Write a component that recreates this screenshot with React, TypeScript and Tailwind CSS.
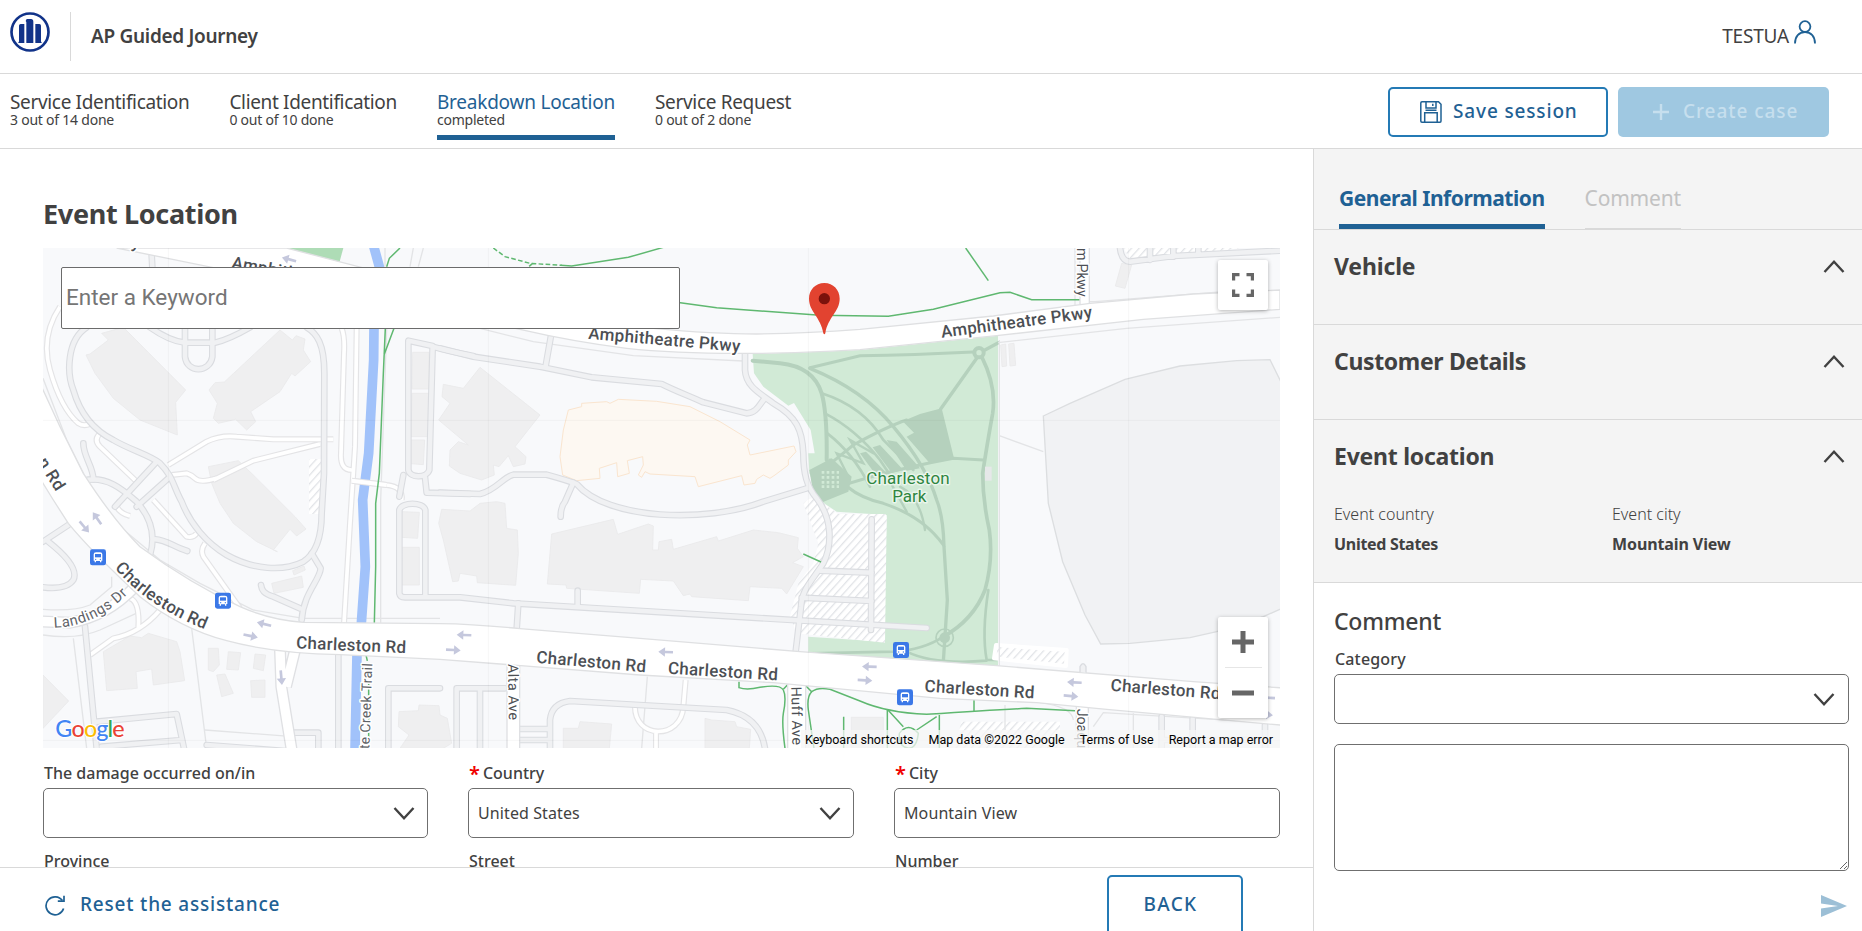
import type { ReactNode } from "react";

const ink = "text-[#414141]";

/* ---------- icons ---------- */

function Chevron({ up = false }: { up?: boolean }) {
  return (
    <svg width="22" height="13" viewBox="0 0 22 13" fill="none" stroke="#414141" strokeWidth="2.4" className="shrink-0">
      <path d={up ? "M1.5 12 L11 1.8 L20.5 12" : "M1.5 1 L11 11.2 L20.5 1"} />
    </svg>
  );
}

function Logo() {
  return (
    <svg width="40" height="40" viewBox="0 0 120 120" className="shrink-0">
      <circle cx="60" cy="60" r="55.5" fill="none" stroke="#113389" strokeWidth="8" />
      <path d="M27 41 Q27 36 32 36 H43 V93 H25 V91 Q27 91 27 87 Z" fill="#113389" />
      <path d="M47 27 L50 21 H63 Q70 21 70 29 V93 H49 V30 Z" fill="#113389" />
      <path d="M76 36 H88 Q93 36 93 41 V87 Q93 91 95 91 V93 H76 Z" fill="#113389" />
    </svg>
  );
}

function UserIcon() {
  return (
    <svg width="22" height="24" viewBox="0 0 22 24" fill="none" stroke="#1f6194" strokeWidth="1.8">
      <circle cx="11" cy="6.6" r="5.4" />
      <path d="M1 23.5 C1 16.5 5 12.2 11 12.2 C17 12.2 21 16.5 21 23.5" />
    </svg>
  );
}

function SaveIcon() {
  return (
    <svg width="22" height="22" viewBox="0 0 22 22" fill="none" stroke="#1f6194" strokeWidth="1.5">
      <path d="M2 .8 H18.5 L21 3.3 V20 Q21 21.2 20 21.2 H2 Q.8 21.2 .8 20 V2 Q.8 .8 2 .8 Z" />
      <path d="M6 .8 V7 H16 V.8 M12.8 2.8 V5" />
      <path d="M4.7 21 V11.8 H17.2 V21 M5.5 9.3 H16.5" />
    </svg>
  );
}

function ResetIcon() {
  return (
    <svg width="20" height="21" viewBox="0 0 20 21" fill="none" stroke="#1f6194" strokeWidth="1.7">
      <path d="M18.6 13.6 A9 9 0 1 1 17.4 5.6" />
      <path d="M19 .8 V6.2 H12.8" />
    </svg>
  );
}

/* ---------- map: drawn at three units per pixel ---------- */

const serviceRoads = [
  "M140 262 C80 300 80 400 100 450 C120 520 160 570 220 600 C270 630 330 645 360 670 C400 710 400 740 425 785 C450 850 500 910 560 945 C640 990 730 995 790 965 C830 940 845 890 845 820 L852 700 L853 400 C853 310 830 280 800 262",
  "M330 262 C370 290 400 305 435 308 L525 308 C560 300 590 285 630 262",
  "M435 262 V350 C440 400 510 400 517 350 V262",
  "M130 610 C130 650 160 680 160 718",
  "M130 722 C200 705 250 750 290 785 C330 830 350 880 330 945",
  "M350 665 L225 800 M385 715 L290 800",
  "M345 898 C380 900 400 920 442 933",
  "M815 940 L842 985 C840 1020 790 1060 785 1140 M780 1105 L700 1070 C670 1060 665 1050 663 1035",
  "M335 45 L337 82",
  "M1105 305 V690 C1110 715 1160 715 1168 690 L1178 318 L1105 302 M1178 320 C1230 335 1260 340 1300 348",
  "M1090 705 L1078 770 M1155 712 L1160 758 L1290 762",
  "M1078 1060 V810 C1085 785 1150 785 1156 810 V1070 M1078 1060 Q1080 1072 1095 1072 H1260 L1420 1090 L2660 1164",
  "M1200 325 L1300 350 L1500 380 L1655 412 L1865 432 C1900 450 1940 465 1990 487 L2120 520 C2150 520 2160 490 2172 478",
  "M1533 287 L1517 378",
  "M2115 340 V390 C2118 440 2160 460 2200 490 C2270 530 2287 570 2290 640 C2290 700 2300 740 2330 775 C2380 840 2375 920 2350 970 C2310 1030 2285 1050 2283 1100 L2267 1235",
  "M1200 758 L1320 762 C1370 750 1390 710 1420 704 H1520 C1560 715 1600 728 1610 732 C1700 840 2000 850 2170 785 L2300 745",
  "M1600 728 L1575 785 Q1562 800 1562 830",
  "M1435 1090 L1430 1168 M1613 1098 V1052",
  "M1250 1525 V1345 H1395 M1320 1350 V1525 M1200 1345 H1045 V1525",
  "M1530 1525 V1440 Q1535 1390 1590 1383 L2060 1410 Q2160 1430 2175 1525 M1440 1467 H1530 M1440 1500 H1530",
  "M135 1160 L170 1525 M170 1445 L410 1422 L432 1525 M185 1520 L425 1500 M500 1515 L760 1535 M762 1478 H835 V1525",
  "M895 1245 V1525 M9 905 L85 855 M25 905 Q120 980 100 1020 Q80 1050 9 1042",
  "M2340 992 L2495 998 M2285 1073 L2495 1083 M2495 838 L2493 1170",
  "M3240 24 Q3245 65 3270 65 L3400 48 L3720 32 M3330 24 V60 M3400 24 V50 M3475 24 V44",
  "M3365 1430 V1525 M3458 1436 V1525 M3675 1455 V1525 M3365 1500 H3675",
];

const pathRoads = [
  "M60 200 C20 260 10 320 30 390 C50 460 80 520 115 550 Q130 560 150 552",
  "M180 580 Q160 600 180 620 L290 725 M385 675 L500 605 Q540 585 590 590 L700 598 H880 M520 720 L640 662 L840 612",
  "M905 265 Q915 290 912 340 L903 640 Q900 690 935 690 M950 265 L945 620 L930 850 L912 1150",
  "M395 705 L440 700 Q455 705 465 715 Q480 730 530 715",
  "M935 722 L1040 735 Q1090 740 1085 780",
  "M240 780 L230 800 Q240 820 270 828 M340 780 L440 890 Q460 895 470 880 M495 910 Q480 930 490 950 L600 1105",
  "M150 1245 L220 1195 Q300 1180 360 1110 M270 1075 Q300 1085 295 1165",
  "M1785 1395 C1780 1500 1925 1500 1930 1400 L1937 1320 M1848 1475 V1525",
];

const parcelLines = [
  "M9 415 L80 600 L150 740 L240 860 L360 960 L480 1030 L640 1110 L790 1135 H1200",
  "M1035 24 V80 M1040 265 L1022 780 V1148 M1150 24 L1135 80 M1120 24 L1110 80",
  "M1320 265 L1480 305 L1780 347 L2110 363 M2874 308 L3260 265 L3720 232",
  "M2878 300 V1277 M2878 587 L3010 635",
  "M100 1195 L140 1525 M455 1165 L500 1525 M9 1185 Q110 1200 180 1170 L300 1115 M9 1108 Q100 1115 150 1095 L215 1040 V1010",
  "M495 1470 L760 1490 M1822 1310 L1805 1525 M2895 1395 V1470 M3280 1420 V1525 M3000 1388 Q3095 1400 3100 1440",
  "M3150 185 H3165 L3620 150 M3105 24 V195 M3160 1460 L3190 1418 L3720 1450",
];

const buildings = [
  "185 280 250 262 437 450 407 487 412 585 300 540 220 475 165 400 138 345 150 342 205 300",
  "720 270 757 300 768 287 795 297 790 330 812 365 765 408 755 400 720 455 632 515 647 545 620 570 587 538 535 550 520 535 532 490 507 450 525 428 553 426",
  "505 680 595 662 640 705 765 830 798 867 770 888 750 868 700 930 712 935 650 905 580 850 540 790 515 730",
  "1118 337 1167 337 1167 447 1116 447", "1116 460 1167 460 1165 590 1113 590", "1104 600 1154 600 1150 674 1100 670",
  "1085 815 1138 817 1133 895 1085 892", "1085 922 1138 922 1138 1035 1084 1035",
  "1210 433 1270 445 1320 382 1500 525 1425 620 1458 650 1455 672 1420 680 1405 647 1377 680 1360 675 1363 705 1325 720 1260 700 1228 678 1230 630 1255 605 1285 615 1196 540 1230 490 1206 470",
  "1205 808 1290 813 1320 790 1370 785 1395 790 1400 865 1432 870 1435 940 1427 1036 1312 1028 1310 1008 1260 1000 1255 1023 1238 1025 1210 900 1196 850",
  "1535 882 1720 838 1733 883 1825 852 1840 858 1838 930 1855 930 1857 905 1895 898 1900 928 2030 890 2035 903 2140 870 2215 878 2275 893 2272 925 2290 950 2258 968 2290 980 2240 1062 2225 1045 2130 1040 2125 1082 1955 1070 1950 1062 1930 1067 1900 1023 1802 1018 1798 1060 1580 1045 1578 1035 1522 1032",
  "695 1030 785 1008 790 1042 702 1060", "758 992 792 978 796 990 762 1005",
  "190 1235 270 1188 305 1193 325 1180 410 1205 420 1235 434 1322 340 1335 335 1287 288 1295 292 1345 200 1352",
  "9 1305 86 1383 9 1465", "505 1225 535 1225 538 1275 520 1295 505 1290", "565 1235 602 1238 595 1290 560 1288",
  "645 1242 677 1245 670 1292 640 1285", "530 1305 555 1302 580 1360 545 1370", "632 1322 675 1320 675 1372 635 1372",
  "1077 1415 1135 1412 1137 1395 1197 1397 1200 1425 1222 1435 1235 1510 1210 1525 1080 1525 1107 1485 1075 1460",
  "1570 1465 1615 1465 1620 1445 1715 1452 1708 1525 1570 1525", "1995 1435 2015 1440 2085 1445 2090 1460 2132 1468 2128 1525 1995 1525",
  "2882 315 2897 312 2900 378 2886 380", "2906 312 2922 310 2927 376 2910 378", "3245 70 3275 75 3255 145 3226 138", "2434 1432 2530 1432 2530 1525 2434 1525",
];

const parkPaths: [string, number][] = [
  ["M2138 362 L2220 370 Q2320 380 2345 460 Q2362 520 2360 660", 12],
  ["M2310 383 L2460 347 Q2620 345 2800 336", 9],
  ["M2310 385 Q2470 450 2560 560 Q2660 680 2690 780 Q2710 830 2712 920 L2722 1080 L2710 1265", 10],
  ["M2345 460 Q2470 500 2530 600 L2620 690", 8], ["M2355 520 Q2450 570 2520 660 L2560 720", 8], ["M2362 580 Q2440 640 2490 740", 8],
  ["M2817 345 L2702 507 M2817 340 L2875 308", 10],
  ["M2825 350 Q2870 440 2858 520 Q2840 620 2828 700 Q2828 780 2848 870 Q2860 960 2835 1050 Q2800 1140 2710 1190", 11],
  ["M2360 680 L2440 615 Q2540 560 2600 540", 9], ["M2340 760 Q2500 700 2740 655 L2830 660", 9],
  ["M2370 660 Q2400 760 2530 790 Q2650 830 2710 915", 9], ["M2580 740 Q2640 770 2655 870 M2550 725 L2600 815", 7],
  ["M2845 1050 Q2825 1180 2840 1260 H2870 M2710 1190 Q2650 1230 2560 1235 L2308 1240 M2600 1235 Q2680 1275 2840 1262", 8],
  ["M2430 720 L2390 640 L2470 670 L2430 600 L2500 640", 7],
];

const greenTrails = [
  "M1080 24 L1048 55 L1040 80 M1062 265 L1032 345 M1036 265 L1030 400 L1018 700 L1007 790 V980 L1003 1150",
  "M1562 76 L1595 78 L1765 52 L1870 22", "M1910 187 L2030 203 L2340 226 L2545 229 L2680 208 L2880 158 L2910 157 L2975 179 H3122",
  "M2777 24 L2845 122", "M2290 942 L2343 966",
  "M2097 1325 V1343 Q2120 1352 2160 1342 Q2220 1332 2230 1350 Q2240 1370 2230 1420 Q2225 1450 2235 1525",
  "M2230 1348 L2245 1332 M2295 1335 L2315 1355 Q2335 1340 2370 1348 L2460 1383 Q2540 1418 2660 1423 Q2860 1410 2960 1405 L3105 1412",
  "M2315 1355 Q2300 1370 2305 1410 L2322 1525 M2411 1430 V1525 M2542 1410 V1525 M2544 1410 L2590 1460 M2690 1430 L2630 1470 M2698 1425 V1525 M2802 1380 V1415",
  "M2578 1480 Q2605 1445 2635 1480 Q2630 1525 2605 1525 Q2575 1520 2578 1480",
];

const amphitheatre =
  "M740 24 L955 80 L1400 190 L1840 265 Q2020 282 2150 282 Q2300 280 2460 268 L2860 228 L3150 190 L3460 162 L3720 150 V208 L3310 238 L2870 287 L2460 329 Q2240 342 2100 340 Q1900 340 1760 325 Q1600 305 1440 268 L505 80 L230 24 Z";
const charleston =
  "M0 430 L60 560 L130 700 Q220 840 300 920 Q450 1030 600 1100 Q690 1140 790 1147 L1200 1151 Q1300 1152 1440 1166 L1800 1195 L2280 1235 L2870 1277 L3460 1325 L3730 1344 V1456 L3200 1408 L2990 1388 L2700 1375 L2200 1328 L1800 1305 L1380 1272 L1200 1258 L900 1244 Q700 1240 560 1202 Q420 1165 300 1070 Q150 930 85 850 L40 780 L0 715 Z";

const arrows: [number, number, number][] = [
  [171, 835, 235], [133, 861, 50], [672, 1152, 194], [632, 1188, 12], [724, 1313, 85], [1240, 1230, 3], [1272, 1185, 182],
  [1877, 1236, 182], [2488, 1280, 182], [2475, 1321, 3], [3103, 1327, 183], [3093, 1368, 5], [3683, 1373, 184], [3677, 1424, 5], [747, 58, 195],
];

const busStops = [[150, 928], [525, 1058], [2559, 1206], [2571, 1348]];

function RoadLabel({ x, y, r, w, size = 51, color = "#4c4f54", weight = 500, children }: { x: number; y: number; r: number; w: number; size?: number; color?: string; weight?: number; children: ReactNode }) {
  return (
    <text transform={`translate(${x} ${y}) rotate(${r})`} fontSize={size} fontWeight={weight} fill={color} textLength={w} stroke="#fff" strokeWidth="9" strokeLinejoin="round" paintOrder="stroke">
      {children}
    </text>
  );
}

function MapCanvas() {
  return (
    <svg width="1237" height="500" viewBox="9 24 3711 1500" className="block font-['Roboto',sans-serif]" fill="none">
      <defs>
        <pattern id="hatch" width="17" height="17" patternUnits="userSpaceOnUse" patternTransform="rotate(42)">
          <rect width="17" height="17" fill="#fff" />
          <path d="M2 0 V17" stroke="#dfe1e5" strokeWidth="3.5" />
        </pattern>
        <path id="curve-charleston" d="M224 984 Q325 1105 520 1178" />
        <path id="curve-landings" d="M42 1163 Q170 1160 275 1050" />
      </defs>
      <rect x="9" y="24" width="3711" height="1500" fill="#f8f9fb" />
      <path d="M740 24 H910 L898 68 Z" fill="#aedcb6" />
      <path d="M3010 528 L3090 490 L3255 418 L3420 378 L3590 362 L3690 359 L3730 440 V1103 L3670 1130 L3530 1175 L3450 1193 L3270 1210 L3182 1212 L3135 1125 L3068 965 L3025 790 Z" fill="#f1f2f4" stroke="#dcdee0" strokeWidth="4" />

      {/* commercial block */}
      <path d="M1585 510 L1625 500 V490 L1700 485 L1710 490 L1735 478 L1850 484 L1950 500 L2040 545 L2130 600 L2122 615 L2130 645 L2262 618 L2268 635 L2245 660 V675 L2205 705 L2190 715 L2170 705 L2150 718 L2145 730 L2112 735 L2105 707 L1975 740 L1965 710 L1830 702 L1815 695 L1805 712 L1795 705 L1810 675 L1808 650 L1762 662 L1768 700 L1733 710 L1730 668 L1678 685 L1680 715 L1610 722 L1568 705 L1560 650 L1570 570 Z" fill="#fdf8f2" stroke="#fae5cf" strokeWidth="3" />

      {/* park */}
      <path d="M2138 342 L2460 330 L2874 287 V1277 L2680 1267 L2305 1237 V1190 L2530 1205 L2540 825 L2390 815 L2345 785 L2308 700 L2305 640 L2324 640 L2312 570 L2262 489 L2245 497 L2170 440 L2142 400 Z" fill="#d1ead6" />
      <g stroke="#b5d1bd" strokeLinecap="round">
        {parkPaths.map(([d, w]) => <path key={d} d={d} strokeWidth={w} />)}
      </g>
      <g fill="#b5d1bd">
        <path d="M2588 544 L2640 522 L2705 505 L2742 655 L2668 668 L2600 590 L2622 578 Z" />
        <path d="M2540 600 L2570 605 L2640 685 L2600 692 Z M2498 622 L2520 615 L2590 690 L2555 698 Z M2460 640 L2478 635 L2540 700 L2510 708 Z" />
        <path d="M2308 690 L2375 655 L2435 710 L2425 755 L2340 790 L2318 750 Z" />
        <circle cx="2817" cy="338" r="20" />
        <circle cx="2714" cy="1193" r="16" />
      </g>
      <circle cx="2817" cy="338" r="8" fill="#d1ead6" />
      <circle cx="2714" cy="1193" r="26" stroke="#b5d1bd" strokeWidth="5" />
      <path d="M2345 697 H2397 M2345 712 H2397 M2345 727 H2397 M2345 740 H2397" stroke="#d1ead6" strokeWidth="8" strokeDasharray="8 7" />
      <rect x="2835" y="680" width="20" height="42" fill="#e6e8e9" />

      {/* parking lots */}
      <g fill="url(#hatch)">
        <path d="M2290 790 Q2320 760 2350 790 L2395 822 H2535 Q2541 825 2540 840 L2535 1208 L2270 1180 L2250 1130 L2275 1030 L2320 970 L2335 910 Z" />
        <path d="M2868 1215 L3080 1230 L3078 1278 L2862 1255 Z" stroke="#fff" strokeWidth="12" strokeLinejoin="round" />
        <rect x="807" y="657" width="36" height="165" />
        <path d="M3250 24 H3600 L3480 42 L3270 56 Z" />
        <path d="M2765 1445 H3060 V1525 H2740 Z" />
      </g>

      <g fill="#efeff0" stroke="#e9e9ea" strokeWidth="2.5">
        {buildings.map((p) => <polygon key={p} points={p} />)}
      </g>
      <g stroke="#e3e4e6" strokeWidth="4">
        {parcelLines.map((d) => <path key={d} d={d} />)}
      </g>
      <g stroke="#e4e4e6" strokeWidth="18" strokeLinejoin="round">
        {pathRoads.map((d) => <path key={d} d={d} />)}
      </g>
      <g stroke="#fff" strokeWidth="11" strokeLinejoin="round">
        {pathRoads.map((d) => <path key={d} d={d} />)}
      </g>
      <g stroke="#dadce0" strokeWidth="20" strokeLinecap="round" strokeLinejoin="round">
        {serviceRoads.map((d) => <path key={d} d={d} />)}
      </g>
      <g stroke="#f0f1f3" strokeWidth="13.5" strokeLinecap="round" strokeLinejoin="round">
        {serviceRoads.map((d) => <path key={d} d={d} />)}
      </g>

      {/* creek */}
      <path d="M1000 15 L1018 80 L1002 262 L1001 360 L986 640 L968 780 L976 980 L964 1150 L951 1240 L945 1530" stroke="#a1c2fa" strokeWidth="29" />
      <path d="M935 722 L1040 735" stroke="#e4e4e6" strokeWidth="18" />
      <path d="M935 722 L1040 735" stroke="#fff" strokeWidth="12" />
      <g stroke="#5fb870" strokeWidth="4.5">
        {greenTrails.map((d) => <path key={d} d={d} />)}
        <path d="M1360 24 L1395 50 L1470 70 L1565 76 M1478 70 L1462 84" strokeDasharray="14 7" />
        <path d="M978 1245 L986 1280 V1525" strokeDasharray="18 8" />
      </g>

      {/* side streets, then the two main roads over them */}
      <g stroke="#dfe0e3">
        <path d="M720 1230 L724 1340 L755 1530 M765 1230 L738 1340" strokeWidth="36" />
        <path d="M0 1144 L90 1148 Q200 1130 285 1040" strokeWidth="36" />
        <path d="M1420 1270 V1530" strokeWidth="42" /><path d="M2270 1330 V1530" strokeWidth="58" />
        <path d="M3134 20 V210" strokeWidth="32" /><path d="M3127 1390 V1530" strokeWidth="40" />
      </g>
      <g stroke="#fff">
        <path d="M720 1230 L724 1340 L755 1530 M765 1230 L738 1340" strokeWidth="28" />
        <path d="M0 1144 L90 1148 Q200 1130 285 1040" strokeWidth="28" />
        <path d="M1420 1270 V1530" strokeWidth="34" /><path d="M2270 1330 V1530" strokeWidth="50" />
        <path d="M3134 20 V210" strokeWidth="24" /><path d="M3127 1390 V1530" strokeWidth="32" />
      </g>
      <path d={amphitheatre} fill="#fff" stroke="#dfe0e2" strokeWidth="4" />
      <path d={charleston} fill="#fff" stroke="#dfe0e2" strokeWidth="4" />
      <path d="M3120 1296 V1280 Q3129 1262 3138 1280 V1298" fill="#f0f1f3" stroke="#dadce0" strokeWidth="4" />
      <path d="M9 541 H3720 M9 1501 H3720 M385 24 V1524 M1345 24 V1524 M2305 24 V1524 M3266 24 V1524" stroke="#000" strokeOpacity=".035" strokeWidth="3" />

      {arrows.map(([x, y, r]) => (
        <path key={`${x}-${y}`} transform={`translate(${x} ${y}) rotate(${r})`} d="M-22 -4 H2 V-14 L22 0 L2 14 V4 H-22 Z" fill="#c5c8dd" />
      ))}

      <RoadLabel x={573} y={84} r={10} w={457}>Amphitheatre Pkwy</RoadLabel>
      <RoadLabel x={1644} y={296} r={5} w={457}>Amphitheatre Pkwy</RoadLabel>
      <RoadLabel x={2705} y={293} r={-7.5} w={457}>Amphitheatre Pkwy</RoadLabel>
      <RoadLabel x={768} y={1225} r={2.5} w={330}>Charleston Rd</RoadLabel>
      <RoadLabel x={1488} y={1268} r={5} w={330}>Charleston Rd</RoadLabel>
      <RoadLabel x={1883} y={1301} r={3.5} w={330}>Charleston Rd</RoadLabel>
      <RoadLabel x={2653} y={1355} r={3.5} w={330}>Charleston Rd</RoadLabel>
      <RoadLabel x={3211} y={1352} r={4.5} w={330}>Charleston Rd</RoadLabel>
      <RoadLabel x={-8} y={666} r={58} w={106}>n Rd</RoadLabel>
      <RoadLabel x={214} y={10} r={11} w={85}>kwy</RoadLabel>
      <RoadLabel x={1404} y={1272} r={89} w={168} size={43} weight={400}>Alta Ave</RoadLabel>
      <RoadLabel x={2254} y={1340} r={89} w={175} size={43} weight={400}>Huff Ave</RoadLabel>
      <RoadLabel x={3112} y={1406} r={90} w={152} size={43} weight={400}>Joaquin</RoadLabel>
      <RoadLabel x={3110} y={24} r={90} w={146} size={43} weight={400}>m Pkwy</RoadLabel>
      <RoadLabel x={988} y={1528} r={-88} w={258} size={42} weight={400} color="#5f6368">te Creek Trail</RoadLabel>
      <g stroke="#fff" strokeWidth="9" strokeLinejoin="round" paintOrder="stroke" fill="#4c4f54">
        <text fontSize="51" fontWeight="500"><textPath href="#curve-charleston" textLength="330">Charleston Rd</textPath></text>
        <text fontSize="44" fill="#5f6368"><textPath href="#curve-landings" textLength="250">Landings Dr</textPath></text>
        <g fontSize="51" fill="#2e8540" textAnchor="middle" stroke="#e9f5eb">
          <text x="2604" y="733" textLength="250">Charleston</text>
          <text x="2608" y="785">Park</text>
        </g>
      </g>

      {busStops.map(([x, y]) => (
        <g key={`${x}-${y}`} transform={`translate(${x} ${y})`}>
          <rect width="48" height="48" rx="7" fill="#3b78e7" />
          <path d="M11 15 Q11 9 18 9 H30 Q37 9 37 15 V34 H34 V39 H30 V35 H18 V39 H14 V34 H11 Z" fill="#fff" />
          <path d="M15 14 H33 V24 H15 Z" fill="#3b78e7" />
          <circle cx="17" cy="30" r="2" fill="#3b78e7" /><circle cx="31" cy="30" r="2" fill="#3b78e7" />
        </g>
      ))}

      {/* marker */}
      <path d="M2353 129 C2326 129 2307 150 2307 176 C2307 215 2343 232 2350 280 Q2353 286 2356 280 C2363 232 2399 215 2399 176 C2399 150 2380 129 2353 129 Z" fill="#e24330" />
      <circle cx="2353" cy="176" r="17" fill="#7b120c" />

      <text x="46" y="1490" fontSize="70" fontWeight="500" textLength="208" className="font-['Lato',sans-serif]" stroke="#fff" strokeWidth="6" paintOrder="stroke">
        <tspan fill="#4285f4">G</tspan><tspan fill="#ea4335">o</tspan><tspan fill="#fbbc04">o</tspan><tspan fill="#4285f4">g</tspan><tspan fill="#34a853">l</tspan><tspan fill="#ea4335">e</tspan>
      </text>
    </svg>
  );
}

function LocationMap() {
  return (
    <div className="relative mt-4 h-[500px] w-[1237px] overflow-hidden">
      <MapCanvas />
      <input
        placeholder="Enter a Keyword"
        className="absolute left-[18px] top-[19px] h-[62px] w-[619px] rounded-[2px] border border-[#6b6b6b] bg-white pb-[2px] pl-[4px] font-['Roboto',sans-serif] text-[22.5px] placeholder:text-[#757575]"
      />
      <button className="absolute right-3 top-3 flex h-[50px] w-[50px] items-center justify-center rounded-[2px] bg-white shadow-[0_1px_4px_rgba(0,0,0,0.3)]">
        <svg width="22" height="24" viewBox="0 0 22 24" fill="none" stroke="#666" strokeWidth="3.2">
          <path d="M1.6 7.5 V1.6 H7.5 M14.5 1.6 H20.4 V7.5 M20.4 16.5 V22.4 H14.5 M7.5 22.4 H1.6 V16.5" />
        </svg>
      </button>
      <div className="absolute right-3 top-[369px] flex h-[101px] w-[50px] flex-col items-center rounded-[2px] bg-white shadow-[0_1px_4px_rgba(0,0,0,0.3)]">
        <button className="flex h-[50px] w-full items-center justify-center">
          <svg width="22" height="22" viewBox="0 0 22 22" stroke="#666" strokeWidth="5"><path d="M0 11 H22 M11 0 V22" /></svg>
        </button>
        <div className="h-px w-[37px] bg-[#e6e6e6]" />
        <button className="flex h-[50px] w-full items-center justify-center">
          <svg width="22" height="22" viewBox="0 0 22 22" stroke="#666" strokeWidth="5"><path d="M0 11 H22" /></svg>
        </button>
      </div>
      <div className="absolute bottom-0 right-0 flex h-[18px] items-center gap-[15px] bg-[#f5f5f5]/75 pl-1 pr-[7px] pt-px font-['Roboto',sans-serif] text-[12.5px] leading-[18px] text-black">
        <span>Keyboard shortcuts</span>
        <span>Map data ©2022 Google</span>
        <span>Terms of Use</span>
        <span>Report a map error</span>
      </div>
    </div>
  );
}

/* ---------- page parts ---------- */

function Step({ title, note, active = false, tracking }: { title: string; note: string; active?: boolean; tracking: string }) {
  return (
    <div className={`flex flex-col border-b-[5px] pb-[9px] ${active ? "border-[#1f6194]" : "border-transparent"}`}>
      <span className={`text-[19px] leading-[22px] ${tracking} ${active ? "text-[#1f6194]" : ""}`}>{title}</span>
      <span className="text-[14px] leading-[13px] tracking-[-0.23px]">{note}</span>
    </div>
  );
}

function Field({ label, value = "", required = false, select = false }: { label: string; value?: string; required?: boolean; select?: boolean }) {
  return (
    <div className="flex flex-col">
      <label className="flex h-[25px] pl-px text-[16px] font-medium leading-[25px]">
        {required && <span className="mr-[3px] text-[20px] font-semibold leading-[25px] text-[#f00000]">*</span>}
        {label}
      </label>
      <div className="mt-[2px] flex h-[50px] items-center justify-between rounded-[5px] border border-[#6f6f6f] pl-[9px] pr-[12px]">
        <span className="text-[16px] tracking-[0.1px]">{value}</span>
        {select && <Chevron />}
      </div>
    </div>
  );
}

function Section({ title, tracking, className, children }: { title: string; tracking: string; className: string; children?: ReactNode }) {
  return (
    <section className={`border-b border-[#d9d9d9] pl-5 pr-[17px] pt-5 ${className}`}>
      <div className="flex h-8 items-center justify-between">
        <h2 className={`text-[23px] font-bold leading-8 ${tracking}`}>{title}</h2>
        <Chevron up />
      </div>
      {children}
    </section>
  );
}

export default function App() {
  return (
    <div className={`flex h-[931px] w-[1862px] flex-col overflow-hidden bg-white font-['Noto_Sans',sans-serif] ${ink}`}>
      <header className="flex h-[74px] shrink-0 items-start border-b border-[#d9d9d9] pl-[10px] pr-[46px] pt-3">
        <Logo />
        <div className="ml-5 h-[49px] w-px bg-[#d9d9d9]" />
        <h1 className="ml-5 mt-3 text-[19px] font-semibold leading-6 tracking-[-0.3px]">AP Guided Journey</h1>
        <div className="ml-auto flex items-start gap-[5px]">
          <span className="mt-3 text-[19px] leading-6 tracking-[-0.2px]">TESTUA</span>
          <div className="mt-2"><UserIcon /></div>
        </div>
      </header>

      <nav className="flex h-[75px] shrink-0 items-start border-b border-[#d9d9d9] pl-[10px] pr-[33px]">
        <div className="flex gap-10 pt-[17px]">
          <Step title="Service Identification" note="3 out of 14 done" tracking="tracking-[-0.34px]" />
          <Step title="Client Identification" note="0 out of 10 done" tracking="tracking-[-0.34px]" />
          <Step title="Breakdown Location" note="completed" active tracking="tracking-[-0.22px]" />
          <Step title="Service Request" note="0 out of 2 done" tracking="tracking-[-0.32px]" />
        </div>
        <div className="ml-auto flex gap-[10px] pt-[13px] text-[19px] font-medium">
          <button className="flex h-[50px] w-[220px] items-center rounded-[5px] border-2 border-[#247ab5] pl-[30px] tracking-[0.85px] text-[#1f6194]">
            <SaveIcon />
            <span className="-mt-px ml-[11px]">Save session</span>
          </button>
          <button className="flex h-[50px] w-[211px] items-center rounded-[5px] bg-[#9fc8e1] pl-[35px] tracking-[0.95px] text-[#c6dfee]">
            <svg width="16" height="16" viewBox="0 0 16 16" stroke="currentColor" strokeWidth="2.4"><path d="M0 8 H16 M8 0 V16" /></svg>
            <span className="-mt-px ml-[14px]">Create case</span>
          </button>
        </div>
      </nav>

      <div className="flex min-h-0 flex-1">
        <main className="flex w-[1313px] flex-col">
          <div className="min-h-0 flex-1 overflow-hidden pl-[43px] pr-[33px] pt-[46px]">
            <h2 className="text-[27px] font-bold leading-[37px] tracking-[-0.32px]">Event Location</h2>
            <LocationMap />
            <div className="mt-[13px] grid grid-cols-[385px_386px_386px] gap-x-10 gap-y-[11px]">
              <Field label="The damage occurred on/in" select />
              <Field label="Country" value="United States" required select />
              <Field label="City" value="Mountain View" required />
              <Field label="Province" />
              <Field label="Street" />
              <Field label="Number" />
            </div>
          </div>
          <footer className="flex h-16 shrink-0 items-start overflow-hidden border-t border-[#d9d9d9] pl-[45px] pr-[70px] text-[#1f6194]">
            <div className="mt-[26px] flex h-[22px] items-center">
              <ResetIcon />
              <span className="-mt-[2px] ml-[15px] text-[19px] font-medium tracking-[0.8px]">Reset the assistance</span>
            </div>
            <button className="ml-auto mt-[7px] h-[64px] w-[136px] shrink-0 rounded-[5px] border-2 border-[#247ab5] pb-[5px] pr-[9px] text-[19px] font-medium tracking-[1.3px]">BACK</button>
          </footer>
        </main>

        <aside className="flex w-[549px] flex-col border-l border-[#d9d9d9]">
          <div className="bg-[#f4f4f4]">
            <div className="flex border-b border-[#d9d9d9] pl-[25px] pt-[35px] text-[21px] leading-7">
              <div className="border-b-[5px] border-[#1f6194] pb-3 font-bold tracking-[-0.49px] text-[#1f6194]">General Information</div>
              <div className="ml-10 -mb-px border-b-2 border-[#d9d9d9] tracking-[-0.2px] text-[#c2c2c2]">Comment</div>
            </div>
            <Section title="Vehicle" tracking="tracking-[-0.15px]" className="h-[95px]" />
            <Section title="Customer Details" tracking="tracking-[-0.35px]" className="h-[95px]" />
            <Section title="Event location" tracking="tracking-[-0.25px]" className="h-[163px]">
              <div className="mt-[30px] grid grid-cols-[278px_1fr] text-[16px] leading-6">
                <div>
                  <div className="font-light">Event country</div>
                  <div className="mt-[6px] font-bold tracking-[-0.3px]">United States</div>
                </div>
                <div>
                  <div className="font-light">Event city</div>
                  <div className="mt-[6px] font-bold tracking-[-0.1px]">Mountain View</div>
                </div>
              </div>
            </Section>
          </div>
          <div className="flex flex-col pl-5 pr-[13px] pt-[22px]">
            <h2 className="text-[23px] font-medium leading-8 tracking-[-0.24px]">Comment</h2>
            <label className="mt-[10px] pl-px text-[16px] font-medium leading-[25px] tracking-[0.15px]">Category</label>
            <div className="mt-[2px] flex h-[50px] items-center justify-end rounded-[5px] border border-[#6f6f6f] pr-[13px]"><Chevron /></div>
            <textarea className="mt-5 h-[127px] w-full resize rounded-[5px] border border-[#6f6f6f]" />
            <svg width="26" height="22" viewBox="0 0 26 22" className="mr-[2px] mt-6 self-end" fill="#9cbfd6">
              <path d="M0 0 L26 11 L0 22 V13.6 L17 11 L0 8.4 Z" />
            </svg>
          </div>
        </aside>
      </div>
    </div>
  );
}
